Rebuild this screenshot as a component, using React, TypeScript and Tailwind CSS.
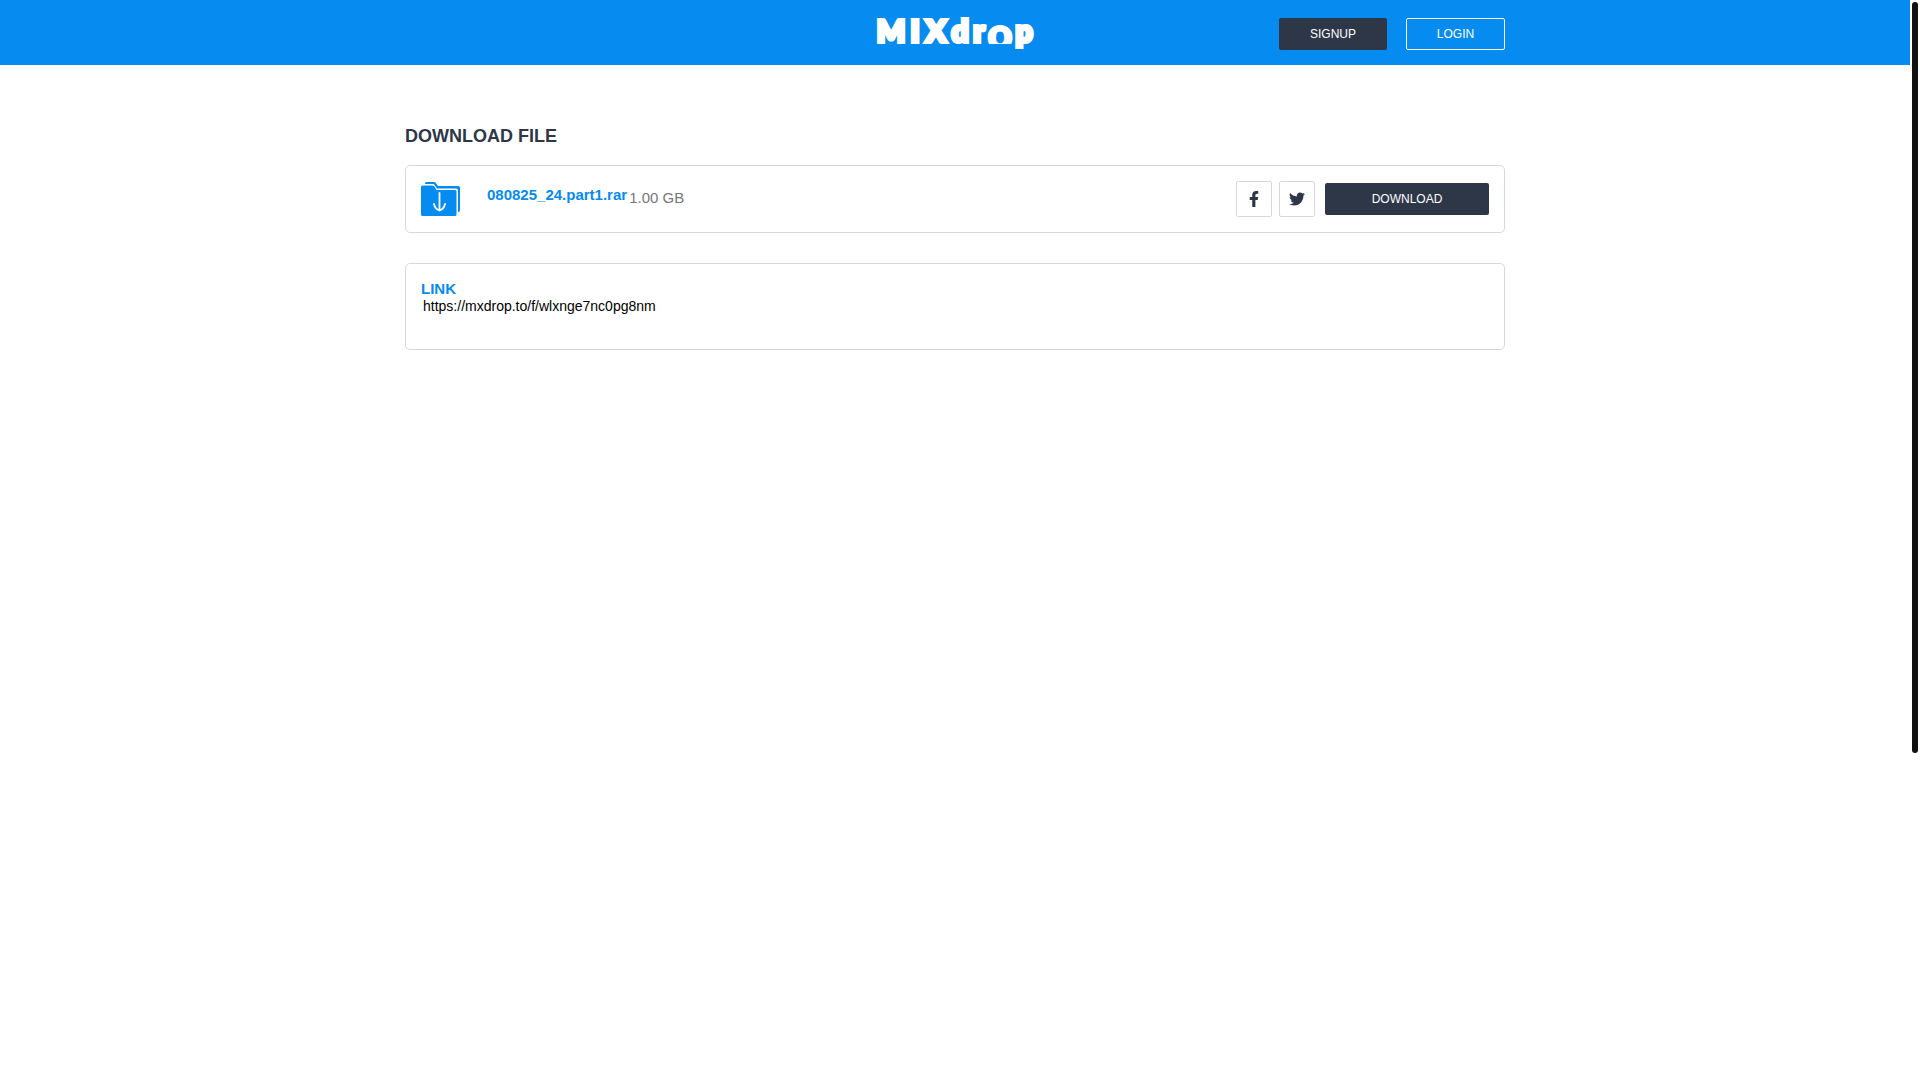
import React from "react";
import { FaFacebookF, FaTwitter } from "react-icons/fa";

function Logo() {
  return (
    <svg
      width="160"
      height="45"
      viewBox="0 0 160 45"
      role="img"
      aria-label="MIXdrop"
      className="block overflow-visible fill-white stroke-white font-['Lato',sans-serif] text-[30px] font-black"
    >
      <defs>
        <clipPath id="baseline">
          <rect x="100" y="0" width="50" height="32" />
        </clipPath>
      </defs>
      <g strokeWidth="4" textAnchor="middle">
        <text x="16" y="30">M</text>
        <text x="40" y="30">I</text>
        <text x="61" y="30">X</text>
        <text x="85" y="30">d</text>
        <text x="104" y="30">r</text>
        <text x="149" y="30">p</text>
      </g>
      <g clipPath="url(#baseline)">
        <text x="125" y="37" strokeWidth="2" textAnchor="middle" className="text-[44px]">o</text>
      </g>
    </svg>
  );
}

function FolderIcon() {
  return (
    <svg width="39" height="34" viewBox="0 0 39 34" aria-hidden="true" className="block shrink-0">
      <path d="M4 1.500Q4 0 5.500 0H13Q14.500 0 15.200 1.400L17 4H37.500Q39 4 39 5.500V28.500Q39 30 37 30V8.500Q37 6.500 35 6.500H16L13.500 3Q13 2 12 2H4Z" fill="#068bf0" />
      <path d="M0 5Q0 3.500 1.500 3.500H11.500Q13 3.500 13.800 5L15.500 8H34Q35.500 8 35.500 9.500V32.500Q35.500 34 34 34H1.500Q0 34 0 32.500Z" fill="#068bf0" />
      <path d="M18.500 11V28M13 22Q14 27 18.500 28.500Q23 27 24 22" fill="none" stroke="#fff" strokeWidth="1.800" strokeLinecap="round" strokeLinejoin="round" />
    </svg>
  );
}

export default function App() {
  return (
    <div className="flex min-h-screen bg-white font-['Liberation_Sans',Arial,sans-serif]">
      <div className="min-w-0 flex-1">
        <header className="h-[65px] bg-[#068bf0]">
          <div className="mx-auto grid h-full max-w-[1100px] grid-cols-[1fr_auto_1fr] items-center">
            <span />
            <a href="#" className="block pt-1">
              <Logo />
            </a>
            <nav className="flex justify-end gap-[19px] pt-[3px] text-xs text-white">
              <a href="#" className="flex h-8 w-[108px] items-center justify-center rounded-xs bg-[#2d3748]">SIGNUP</a>
              <a href="#" className="flex h-8 w-[99px] items-center justify-center rounded-xs border border-white">LOGIN</a>
            </nav>
          </div>
        </header>
        <main className="mx-auto max-w-[1100px] pt-[60px]">
          <h1 className="text-lg leading-[22px] font-bold text-[#2d3748]">DOWNLOAD FILE</h1>
          <section className="mt-[18px] flex h-[68px] items-center rounded-[5px] border border-[#d8d8d8] px-[15px]">
            <FolderIcon />
            <div className="ml-[27px] flex flex-1 gap-0.5 pb-1 text-[15px] leading-[18px]">
              <h2 className="pb-1 font-bold text-[#068bf0]">
                <a href="#">080825_24.part1.rar</a>
              </h2>
              <span className="pt-[3px] text-[#777]">1.00 GB</span>
            </div>
            <a href="#" aria-label="Share on Facebook" className="flex size-9 items-center justify-center rounded-xs border border-[#d8d8d8] text-[#2d3748]">
              <FaFacebookF size={16} />
            </a>
            <a href="#" aria-label="Share on Twitter" className="ml-[7px] flex size-9 items-center justify-center rounded-xs border border-[#d8d8d8] text-[#2d3748]">
              <FaTwitter size={16} />
            </a>
            <button type="button" className="ml-[10px] h-8 w-[164px] rounded-xs bg-[#2d3748] text-xs text-white">DOWNLOAD</button>
          </section>
          <section className="mt-[30px] h-[87px] rounded-[5px] border border-[#d8d8d8] px-[15px] pt-4">
            <label htmlFor="link" className="block text-[15px] leading-[18px] font-bold text-[#068bf0]">LINK</label>
            <input id="link" readOnly defaultValue="https://mxdrop.to/f/wlxnge7nc0pg8nm" className="block w-full px-[2px] text-sm leading-[17px] text-black outline-none" />
          </section>
        </main>
      </div>
      <div className="w-[10px] px-[2px] pt-[2px]">
        <div className="h-[751px] rounded-full bg-[#111]" />
      </div>
    </div>
  );
}
